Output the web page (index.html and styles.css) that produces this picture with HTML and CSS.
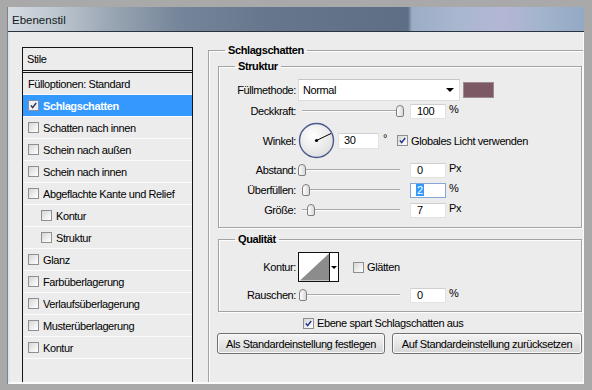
FILE: index.html
```html
<!DOCTYPE html>
<html>
<head>
    <meta charset="UTF-8">
    <title>Ebenenstil</title>
    <link rel="stylesheet" href="styles.css">
</head>
<body>
    <div class="window">
        <div class="titlebar"><span class="title">Ebenenstil</span></div>

        <div class="dialog">
            <!-- Liste der Effekte -->
            <div class="styles-col">
                <div class="style-list">
                    <div class="list-head">Stile</div>
                    <div class="list-item first">Fülloptionen: Standard</div>
                    <div class="list-item selected"><span class="cb checked"><svg viewBox="0 0 11 11"><path d="M2.3 5.4 L4.4 8.2 L8.8 2.4"/></svg></span>Schlagschatten</div>
                    <div class="list-item"><span class="cb"></span>Schatten nach innen</div>
                    <div class="list-item"><span class="cb"></span>Schein nach außen</div>
                    <div class="list-item"><span class="cb"></span>Schein nach innen</div>
                    <div class="list-item"><span class="cb"></span>Abgeflachte Kante und Relief</div>
                    <div class="list-item sub"><span class="cb"></span>Kontur</div>
                    <div class="list-item sub"><span class="cb"></span>Struktur</div>
                    <div class="list-item"><span class="cb"></span>Glanz</div>
                    <div class="list-item"><span class="cb"></span>Farbüberlagerung</div>
                    <div class="list-item"><span class="cb"></span>Verlaufsüberlagerung</div>
                    <div class="list-item"><span class="cb"></span>Musterüberlagerung</div>
                    <div class="list-item"><span class="cb"></span>Kontur</div>
                </div>
            </div>

            <!-- Einstellungen Schlagschatten -->
            <div class="settings">
                <fieldset class="group outer">
                    <legend>Schlagschatten</legend>

                    <fieldset class="group">
                        <legend>Struktur</legend>

                        <div class="row r-mode">
                            <span class="label">Füllmethode:</span>
                            <div class="select">Normal<span class="arrow"></span></div>
                            <span class="swatch"></span>
                        </div>

                        <div class="row">
                            <span class="label">Deckkraft:</span>
                            <div class="slider"><span class="thumb" style="left: 98px"></span></div>
                            <span class="num">100</span>
                            <span class="unit">%</span>
                        </div>

                        <div class="row r-angle">
                            <span class="label">Winkel:</span>
                            <svg class="dial" viewBox="0 0 37 37">
                                <defs>
                                    <radialGradient id="dialfill" cx="0.4" cy="0.35" r="0.7">
                                        <stop offset="0" stop-color="#ffffff"/>
                                        <stop offset="1" stop-color="#dedede"/>
                                    </radialGradient>
                                </defs>
                                <circle cx="18.5" cy="18.5" r="17" fill="url(#dialfill)" stroke="#4b5a8c" stroke-width="1.4"/>
                                <line x1="18.5" y1="18.5" x2="33" y2="11.5" stroke="#000" stroke-width="1"/>
                                <circle cx="18.5" cy="18.5" r="1.6" fill="#000"/>
                            </svg>
                            <span class="num angle">30</span>
                            <span class="deg">°</span>
                            <span class="cb checked global"><svg viewBox="0 0 11 11"><path d="M2.3 5.4 L4.4 8.2 L8.8 2.4"/></svg></span>
                            <span class="cb-text">Globales Licht verwenden</span>
                        </div>

                        <div class="row">
                            <span class="label">Abstand:</span>
                            <div class="slider"><span class="thumb" style="left: 0px"></span></div>
                            <span class="num">0</span>
                            <span class="unit">Px</span>
                        </div>

                        <div class="row">
                            <span class="label">Überfüllen:</span>
                            <div class="slider"><span class="thumb" style="left: 4px"></span></div>
                            <span class="num focus"><span class="sel">2</span></span>
                            <span class="unit">%</span>
                        </div>

                        <div class="row">
                            <span class="label">Größe:</span>
                            <div class="slider"><span class="thumb" style="left: 9px"></span></div>
                            <span class="num">7</span>
                            <span class="unit">Px</span>
                        </div>
                    </fieldset>

                    <fieldset class="group quality">
                        <legend>Qualität</legend>

                        <div class="row r-contour">
                            <span class="label">Kontur:</span>
                            <div class="contour">
                                <svg class="curve" viewBox="0 0 31 28">
                                    <rect width="31" height="28" fill="#fff"/>
                                    <polygon points="1,28 31,0 31,28" fill="#8c8c8c"/>
                                </svg>
                                <span class="contour-drop"></span>
                            </div>
                            <span class="cb smooth"></span>
                            <span class="cb-text">Glätten</span>
                        </div>

                        <div class="row r-noise">
                            <span class="label">Rauschen:</span>
                            <div class="slider"><span class="thumb" style="left: 1px"></span></div>
                            <span class="num">0</span>
                            <span class="unit">%</span>
                        </div>
                    </fieldset>

                    <div class="knockout">
                        <span class="cb checked"><svg viewBox="0 0 11 11"><path d="M2.3 5.4 L4.4 8.2 L8.8 2.4"/></svg></span>
                        <span class="cb-text">Ebene spart Schlagschatten aus</span>
                    </div>

                    <div class="buttons">
                        <button class="btn btn-set">Als Standardeinstellung festlegen</button>
                        <button class="btn btn-reset">Auf Standardeinstellung zurücksetzen</button>
                    </div>
                </fieldset>
            </div>
        </div>
    </div>
</body>
</html>
```

FILE: styles.css
```css
* {
    box-sizing: border-box;
}

html, body {
    margin: 0;
}

body {
    width: 592px;
    height: 390px;
    overflow: hidden;
    padding: 7px 8px 6px 7px;
    background: #a9a9a9;
    font-family: 'Liberation Sans', Arial, sans-serif;
    font-size: 11px;
    letter-spacing: -0.4px;
    color: #000;
}

.window {
    height: 377px;
    display: flex;
    flex-direction: column;
    border-left: 1px solid #7c8490;
    background: #ececec;
}

.titlebar {
    height: 25px;
    flex: none;
    display: flex;
    align-items: center;
    padding-left: 4px;
    border-bottom: 1px solid #2a3441;
    background: linear-gradient(to right,
        #d5dbe1 0px, #bcc5ce 50px, #95a2b0 110px, #76869a 170px,
        #66768c 260px, #5e6e84 400px, #9cadc6 404px,
        #a9b7cf 450px, #b4b6d6 495px, #a4b5cd 530px, #93a9c6 576px);
}

.title {
    font-size: 11.5px;
    letter-spacing: 0;
    color: #15191e;
    padding-top: 1px;
}

.dialog {
    flex: 1;
    display: flex;
    min-height: 0;
    overflow: hidden;
    border-left: 2px solid #dfe5ec;
    border-right: 1px solid #fafafa;
    border-bottom: 2px solid #fbfbfb;
}

/* Liste links */

.styles-col {
    padding: 15px 0 0 12px;
    display: flex;
}

.style-list {
    width: 171px;
    border: 1px solid #141414;
    border-bottom: none;
}

.list-head {
    height: 23px;
    line-height: 22px;
    padding-left: 4px;
    border-bottom: 1px solid #141414;
    margin-bottom: 1px;
}

.list-item {
    height: 22px;
    display: flex;
    align-items: center;
    padding-left: 5px;
    border-bottom: 1px solid #fafafa;
}

.list-item.first {
    height: 23px;
    border-top: 1px solid #141414;
}

.list-item.sub {
    padding-left: 18px;
}

.list-item.selected {
    background: #3399ff;
    color: #fff;
    font-weight: bold;
}

.list-item .cb {
    margin-right: 4px;
}

/* Checkbox */

.cb {
    width: 11px;
    height: 11px;
    flex: none;
    display: inline-flex;
    border: 1px solid #8e8f90;
    background: linear-gradient(135deg, #d6d6d6, #f4f4f4 70%, #fff);
}

.cb svg {
    width: 9px;
    height: 9px;
}

.cb svg path {
    fill: none;
    stroke: #1d2b8c;
    stroke-width: 1.7;
}

.list-item.selected .cb {
    border-color: #7f8fb0;
    background: #f0f0f0;
}

.list-item.selected .cb svg path {
    stroke: #2a2f5a;
}

.cb-text {
    margin-left: 3px;
}

/* Einstellungen rechts */

.settings {
    flex: 1;
    margin-left: 15px;
    padding-top: 12px;
    display: flex;
    flex-direction: column;
}

.group {
    margin: 0;
    min-width: 0;
    border: 1px solid #a3a3a3;
    box-shadow: 1px 1px 0 #fdfdfd, inset 1px 1px 0 #fdfdfd;
    padding: 7px 0 7px 0;
}

.group legend {
    padding: 0 3px;
    margin-left: 16px;
    line-height: 12px;
    font-weight: bold;
}

.group.outer {
    flex: 1;
    border-right: none;
    border-bottom: none;
    box-shadow: inset 1px 1px 0 #fdfdfd;
    padding: 4px 2px 0 9px;
}

.group.outer > legend {
    margin-left: 7px;
}

.group.quality {
    margin-top: 5px;
    padding: 6px 0 6px 0;
}

.row {
    height: 20px;
    display: flex;
    align-items: center;
}

.row.r-mode {
    height: 22px;
}

.row.r-angle {
    height: 39px;
}

.row.r-contour {
    height: 32px;
}

.row.r-noise {
    margin-top: 2px;
}

.label {
    width: 77px;
    flex: none;
    text-align: right;
    margin-right: 2px;
}

.select {
    width: 162px;
    height: 22px;
    display: flex;
    align-items: center;
    justify-content: space-between;
    padding: 0 5px 0 4px;
    background: #fff;
    border: 1px solid #dcdcdc;
    border-top-color: #c4c4c4;
}

.arrow {
    width: 0;
    height: 0;
    border-left: 4px solid transparent;
    border-right: 4px solid transparent;
    border-top: 4px solid #000;
}

.swatch {
    width: 31px;
    height: 16px;
    margin-left: 3px;
    background: #7c5864;
    border: 1px solid #a08a92;
}

.slider {
    position: relative;
    width: 106px;
    height: 14px;
    flex: none;
}

.slider::before {
    content: "";
    position: absolute;
    left: 4px;
    right: 4px;
    top: 6px;
    border-top: 1px solid #a8a8a8;
    border-bottom: 1px solid #fcfcfc;
}

.thumb {
    position: absolute;
    top: 1px;
    width: 8px;
    height: 12px;
    border: 1px solid #7e7e7e;
    border-radius: 4px 4px 2px 2px;
    background: linear-gradient(to right, #fdfdfd, #d9d9d9);
}

.num {
    width: 36px;
    height: 15px;
    margin-left: 6px;
    padding-left: 6px;
    line-height: 13px;
    background: #fff;
    border: 1px solid #e2e2e2;
    border-top-color: #cfcfcf;
}

.num.focus {
    border-color: #86a8d6;
    padding-left: 5px;
}

.sel {
    background: #3399ff;
    color: #fff;
    padding: 0 1px;
}

.unit {
    margin-left: 3px;
    align-self: flex-start;
    padding-top: 2px;
}

.dial {
    width: 37px;
    height: 37px;
    flex: none;
}

.num.angle {
    width: 41px;
    height: 16px;
    margin-left: 3px;
    padding-left: 5px;
}

.deg {
    margin-left: 4px;
    margin-top: -6px;
}

.cb.global {
    margin-left: 10px;
}

.contour {
    display: flex;
    width: 41px;
    height: 30px;
    border: 1px solid #111;
    background: #fff;
}

.curve {
    width: 31px;
    height: 28px;
    border-right: 1px solid #111;
}

.contour-drop {
    flex: 1;
    display: flex;
    align-items: center;
    justify-content: center;
}

.contour-drop::after {
    content: "";
    border-left: 3px solid transparent;
    border-right: 3px solid transparent;
    border-top: 3px solid #000;
}

.cb.smooth {
    margin-left: 14px;
}

.knockout {
    height: 16px;
    margin-top: 3px;
    padding-left: 85px;
    display: flex;
    align-items: center;
}

.buttons {
    margin-top: 2px;
    margin-left: -1px;
    display: flex;
    gap: 7px;
}

.btn {
    height: 21px;
    padding: 0;
    font-family: inherit;
    font-size: 11px;
    letter-spacing: -0.4px;
    color: #000;
    border: 1px solid #707070;
    border-radius: 3px;
    background: linear-gradient(#f4f4f4, #e6e6e6 50%, #d6d6d6);
    box-shadow: inset 0 0 0 1px #fbfbfb;
}

.btn-set {
    width: 168px;
}

.btn-reset {
    width: 190px;
}
```
